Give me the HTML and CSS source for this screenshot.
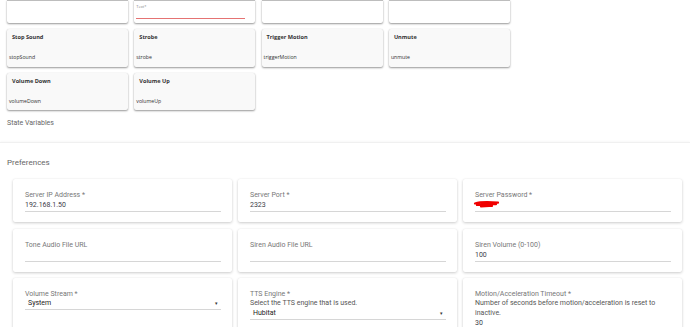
FILE: index.html
```html
<!DOCTYPE html>
<html lang="en">
<head>
    <meta charset="UTF-8">
    <title>Device - Commands and Preferences</title>
    <link rel="stylesheet" href="styles.css">
</head>
<body>
    <div class="commands">
        <div class="cmd cmd-top"><div class="cmd-bar"></div></div>
        <div class="cmd cmd-top">
            <div class="cmd-bar"></div>
            <div class="cmd-text-label">Text*</div>
            <div class="cmd-text-line"></div>
        </div>
        <div class="cmd cmd-top"><div class="cmd-bar"></div></div>
        <div class="cmd cmd-top"><div class="cmd-bar"></div></div>

        <div class="cmd">
            <div class="cmd-title">Stop Sound</div>
            <div class="cmd-name">stopSound</div>
        </div>
        <div class="cmd">
            <div class="cmd-title">Strobe</div>
            <div class="cmd-name">strobe</div>
        </div>
        <div class="cmd">
            <div class="cmd-title">Trigger Motion</div>
            <div class="cmd-name">triggerMotion</div>
        </div>
        <div class="cmd">
            <div class="cmd-title">Unmute</div>
            <div class="cmd-name">unmute</div>
        </div>

        <div class="cmd">
            <div class="cmd-title">Volume Down</div>
            <div class="cmd-name">volumeDown</div>
        </div>
        <div class="cmd">
            <div class="cmd-title">Volume Up</div>
            <div class="cmd-name">volumeUp</div>
        </div>
    </div>

    <div class="state-vars">State Variables</div>

    <div class="prefs">
        <div class="prefs-title">Preferences</div>
        <div class="prefs-grid">
            <div class="pref">
                <div class="pref-label">Server IP Address *</div>
                <div class="pref-input">192.168.1.50</div>
            </div>
            <div class="pref">
                <div class="pref-label">Server Port *</div>
                <div class="pref-input">2323</div>
            </div>
            <div class="pref">
                <div class="pref-label">Server Password *</div>
                <div class="pref-input pref-secret">
                    <svg class="scribble" width="28" height="8" viewBox="0 0 28 8">
                        <path d="M2 3.5 C8 1.5 16 1.8 25 2.6 M4 5 C10 4 17 3.8 23 4.2 M8 6.4 C12 6 16 5.8 19 6" fill="none" stroke="#f00000" stroke-width="2.2" stroke-linecap="round"/>
                    </svg>
                </div>
            </div>

            <div class="pref">
                <div class="pref-label">Tone Audio File URL</div>
                <div class="pref-input"></div>
            </div>
            <div class="pref">
                <div class="pref-label">Siren Audio File URL</div>
                <div class="pref-input"></div>
            </div>
            <div class="pref">
                <div class="pref-label">Siren Volume (0-100)</div>
                <div class="pref-input">100</div>
            </div>

            <div class="pref">
                <div class="pref-label">Volume Stream *</div>
                <div class="pref-input pref-select"><span>System</span><span class="arrow">▾</span></div>
            </div>
            <div class="pref">
                <div class="pref-label">TTS Engine *</div>
                <div class="pref-desc">Select the TTS engine that is used.</div>
                <div class="pref-input pref-select"><span>Hubitat</span><span class="arrow">▾</span></div>
            </div>
            <div class="pref">
                <div class="pref-label">Motion/Acceleration Timeout *</div>
                <div class="pref-desc">Number of seconds before motion/acceleration is reset to inactive.</div>
                <div class="pref-input">30</div>
            </div>
        </div>
    </div>
</body>
</html>
```

FILE: styles.css
```css
body {
    margin: 0;
    background: #fff;
    font-family: Roboto, "Liberation Sans", Arial, sans-serif;
    color: #333;
    overflow: hidden;
}
.commands {
    display: grid;
    grid-template-columns: repeat(4, 121px);
    grid-template-rows: 23px 38px 37px;
    column-gap: 6.3px;
    row-gap: 6px;
    padding-left: 7px;
    font-family: "Open Sans", "Liberation Sans", sans-serif;
}
.cmd {
    position: relative;
    background: #f9f9f9;
    border-radius: 2px;
    box-shadow: 0 1px 2px rgba(0, 0, 0, 0.4), 0 0 1px rgba(0, 0, 0, 0.12);
    padding: 4px 5px 0 5px;
    box-sizing: border-box;
}
.cmd-top {
    background: #fff;
    padding: 0;
    border-radius: 0 0 2px 2px;
}
.cmd-bar {
    height: 1px;
    background: #bdbdbd;
}
.cmd-text-label {
    font-size: 4px;
    color: #888;
    padding: 3px 0 0 2px;
    line-height: 5px;
}
.cmd-text-line {
    height: 1px;
    background: #e57373;
    margin: 9px 10px 0 2px;
}
.cmd-title {
    font-size: 5.6px;
    font-weight: bold;
    color: #333;
    line-height: 8px;
}
.cmd-name {
    font-size: 5.2px;
    color: #333;
    line-height: 8px;
    margin-top: 12px;
    margin-left: -3px;
}
.state-vars {
    font-size: 7px;
    color: #666;
    padding: 9px 0 0 7px;
    line-height: 9px;
}
.prefs {
    margin-top: 14px;
    border-top: 1px solid #f0f0f0;
    box-shadow: 0 -1px 2px rgba(0, 0, 0, 0.03);
    padding: 15px 0 0 7px;
    height: 200px;
}
.prefs-title {
    font-size: 8px;
    color: #666;
    line-height: 10px;
}
.prefs-grid {
    display: grid;
    grid-template-columns: repeat(3, 219px);
    grid-template-rows: 43px 43px 60px;
    column-gap: 6px;
    row-gap: 6.5px;
    margin-top: 11px;
    margin-left: 6px;
}
.pref {
    background: #fff;
    border-radius: 2px;
    box-shadow: 0 1px 3px rgba(0, 0, 0, 0.2), 0 0 1px rgba(0, 0, 0, 0.08);
    padding: 11px 11px 0 12px;
    box-sizing: border-box;
}
.pref-label {
    font-size: 7px;
    line-height: 10px;
    color: #777;
}
.pref-desc {
    font-size: 7px;
    line-height: 9.5px;
    color: #555;
}
.pref-input {
    font-size: 7px;
    line-height: 10px;
    height: 10px;
    color: #3c3c48;
    border-bottom: 1px solid #d6d6d6;
    padding-bottom: 1px;
}
.pref-secret {
    position: relative;
}
.scribble {
    position: absolute;
    left: -2px;
    top: 0;
}
.pref-select {
    display: flex;
    justify-content: space-between;
    padding-left: 3px;
    padding-right: 3px;
    height: 9px;
    line-height: 9px;
    color: #222;
}
.arrow {
    font-size: 5px;
    color: #333;
}
```
